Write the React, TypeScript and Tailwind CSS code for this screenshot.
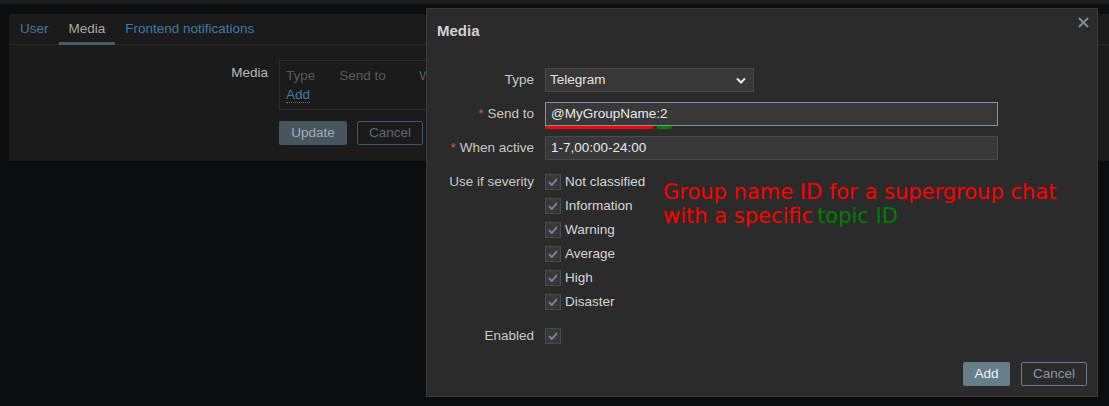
import React from "react";

const Check = () => (
  <span className="flex h-[16px] w-[16px] items-center justify-center border border-[#4a4a4a] bg-[#383838]">
    <svg width="12" height="12" viewBox="0 0 12 12">
      <polyline points="2,6.2 4.8,9 10,3.2" fill="none" stroke="#788e9a" strokeWidth="1.8" />
    </svg>
  </span>
);

const severities = ["Not classified", "Information", "Warning", "Average", "High", "Disaster"];

export default function App() {
  return (
    <div
      className="relative h-[406px] w-[1109px] overflow-hidden bg-[#0c0d0e] text-[13.5px] text-[#c8c8c8]"
      style={{ fontFamily: '"Liberation Sans", Arial, sans-serif' }}
    >
      <div className="h-[4px] bg-[#1b1b1b]" />
      {/* background panel */}
      <div className="ml-[9px] mt-[10px] h-[147px] bg-[#1b1b1b]">
        <div className="flex h-[31px] border-b border-[#2a2a2a] pl-[1px] pt-[1px]">
          <div className="flex items-center px-[10px] text-[#3f7aa0]">User</div>
          <div className="relative flex items-center px-[10px] text-[#a8a8a8]">
            Media
            <span className="absolute bottom-[-1px] left-0 right-0 h-[3px] bg-[#4b5b63]" />
          </div>
          <div className="flex items-center px-[10px] text-[#3f7aa0]">Frontend notifications</div>
        </div>
        <div className="flex pt-[15px]">
          <div className="w-[270px] pr-[11px] pt-[2px] text-right leading-[22px] text-[#b8b8b8]">Media</div>
          <div className="flex flex-col">
            <div className="h-[50px] w-[160px] border border-[#2c2c2c] px-[6px] pt-[7px] leading-[16px]">
              <div className="flex text-[#5a5a5a]">
                <span className="w-[54px]">Type</span>
                <span className="w-[81px]">Send to</span>
                <span>W</span>
              </div>
              <div className="mt-[3px]">
                <span className="border-b border-dotted border-[#3f7aa0] text-[#3f7aa0]">Add</span>
              </div>
            </div>
            <div className="mt-[11px] flex gap-[10px]">
              <div className="flex h-[24px] w-[68px] items-center justify-center rounded-[2px] bg-[#47565e] text-[#a2acb1]">
                Update
              </div>
              <div className="flex h-[24px] w-[66px] items-center justify-center rounded-[2px] border border-[#47565e] text-[#5b6870]">
                Cancel
              </div>
            </div>
          </div>
        </div>
      </div>

      {/* dialog */}
      <div className="absolute left-[426px] top-[8px] flex h-[389px] w-[672px] flex-col border border-[#3a3a3a] bg-[#2b2b2b]">
        <div className="relative flex h-[43px] items-center pl-[10px] pt-[1px]">
          <span className="text-[15px] font-bold text-[#d2d2d2]">Media</span>
          <svg className="absolute right-[8px] top-[8px]" width="11" height="11" viewBox="0 0 11 11">
            <path d="M1 1 L10 10 M10 1 L1 10" stroke="#7c8e97" strokeWidth="2" />
          </svg>
        </div>
        <div className="flex flex-col pt-[16px]">
          <div className="flex h-[24px] items-center">
            <div className="w-[107px] text-right">Type</div>
            <div className="ml-[11px] flex h-[24px] w-[209px] items-center justify-between border border-[#4a4a4a] bg-[#383838] pl-[4px] pr-[7px] text-[#e2e2e2]">
              Telegram
              <svg width="10" height="7" viewBox="0 0 10 7">
                <polyline points="1,1.5 5,5.5 9,1.5" fill="none" stroke="#e8e8e8" strokeWidth="2" />
              </svg>
            </div>
          </div>
          <div className="mt-[10px] flex h-[24px] items-center">
            <div className="w-[107px] text-right">
              <span className="mr-[4px] text-[#d9534f]">*</span>Send to
            </div>
            <div className="relative ml-[11px] flex h-[24px] w-[453px] items-center border border-[#7d95a2] bg-[#383838] pl-[5px] text-[#e8e8e8]">
              @MyGroupName:2
              <span className="absolute left-[-1px] top-[23px] h-[3px] w-[108px] bg-[#ff0000]" />
              <span className="absolute left-[111px] top-[23px] h-[3px] w-[14px] bg-[#008000]" />
            </div>
          </div>
          <div className="mt-[10px] flex h-[24px] items-center">
            <div className="w-[107px] text-right">
              <span className="mr-[4px] text-[#d9534f]">*</span>When active
            </div>
            <div className="ml-[11px] flex h-[24px] w-[453px] items-center border border-[#4a4a4a] bg-[#383838] pl-[5px] text-[#e8e8e8]">
              1-7,00:00-24:00
            </div>
          </div>
          <div className="mt-[10px] flex">
            <div className="w-[107px] text-right leading-[24px]">Use if severity</div>
            <div className="ml-[11px] flex flex-col">
              {severities.map((s) => (
                <div key={s} className="flex h-[24px] items-center gap-[4px] text-[#d6d6d6]">
                  <Check />
                  {s}
                </div>
              ))}
            </div>
          </div>
          <div className="mt-[10px] flex h-[24px] items-center">
            <div className="w-[107px] text-right">Enabled</div>
            <div className="ml-[11px]">
              <Check />
            </div>
          </div>
        </div>
        <div className="mt-auto flex justify-end gap-[11px] pb-[10px] pr-[10px]">
          <div className="flex h-[24px] w-[47px] items-center justify-center rounded-[2px] bg-[#687d8b] text-[#eef1f3]">
            Add
          </div>
          <div className="flex h-[24px] w-[66px] items-center justify-center rounded-[2px] border border-[#687d8b] text-[#8699a5]">
            Cancel
          </div>
        </div>
      </div>

      {/* annotation */}
      <div
        className="absolute left-[663px] top-[180px] text-[21px] leading-[24px] text-[#ff0000]"
        style={{ fontFamily: '"DejaVu Sans", sans-serif' }}
      >
        <div>Group name ID for a supergroup chat</div>
        <div>
          with a specific<span className="ml-[4px] text-[#008000]">topic ID</span>
        </div>
      </div>
    </div>
  );
}
